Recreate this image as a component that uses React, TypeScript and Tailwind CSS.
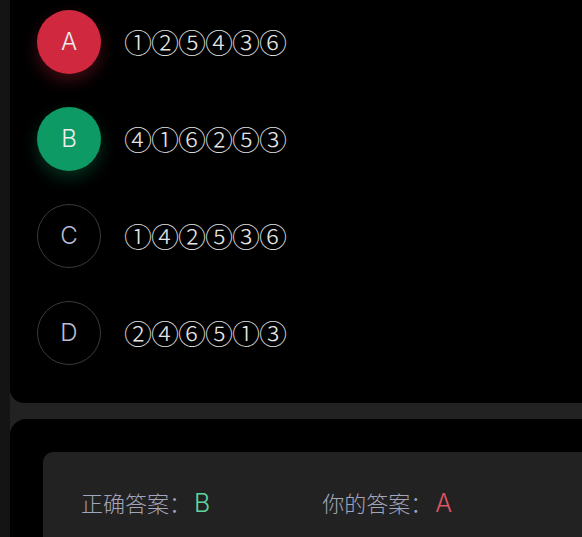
import React from 'react';

type Opt = { key: string; seq: string; state: 'wrong' | 'right' | 'none' };

const options: Opt[] = [
  { key: 'A', seq: '①②⑤④③⑥', state: 'wrong' },
  { key: 'B', seq: '④①⑥②⑤③', state: 'right' },
  { key: 'C', seq: '①④②⑤③⑥', state: 'none' },
  { key: 'D', seq: '②④⑥⑤①③', state: 'none' },
];

const font = { fontFamily: 'Inter, "Noto Sans CJK SC", sans-serif' };

const OptionRow: React.FC<{ opt: Opt }> = ({ opt }) => {
  const circle =
    opt.state === 'wrong'
      ? 'bg-[#d0283f] text-[#ececec] shadow-[0_7px_16px_rgba(208,40,63,0.3)]'
      : opt.state === 'right'
      ? 'bg-[#0e9a64] text-[#ececec] shadow-[0_7px_16px_rgba(14,154,100,0.3)]'
      : 'border border-[#3a3a3a] text-[#b9bcd6]';
  return (
    <div className="flex items-center h-[97px]">
      <div className={`w-16 h-16 rounded-full flex items-center justify-center text-[24px] font-light ${circle}`}>
        {opt.key}
      </div>
      <div
        className="ml-[23px] text-[28px] font-light leading-none text-[#e4e4e4] tracking-[-1px]"
        style={{ fontFamily: '"Noto Sans CJK SC", sans-serif' }}
      >
        {opt.seq}
      </div>
    </div>
  );
};

export default function App() {
  return (
    <div className="flex w-[582px] h-[537px] overflow-hidden bg-[#222222]" style={font}>
      <div className="w-[10px] shrink-0 bg-[#141414]" />
      <div className="flex-1 flex flex-col">
        <div className="bg-black rounded-bl-[14px] pl-[27px] h-[403px] flex flex-col">
          <div className="-mt-[7px]">
            {options.map((o) => (
              <OptionRow key={o.key} opt={o} />
            ))}
          </div>
        </div>
        <div className="mt-4 flex-1 bg-black rounded-tl-[16px] pl-[33px] pt-[33px]">
          <div className="bg-[#222222] rounded-tl-[10px] h-full flex items-baseline pl-[38px] pt-[36px] text-[22px] leading-[30px]">
            <span className="text-[#a3a5bb] font-light">正确答案：</span>
            <span className="ml-[3px] text-[25px] font-light text-[#5fd3a0]">B</span>
            <span className="ml-[112px] text-[#a3a5bb] font-light">你的答案：</span>
            <span className="ml-[3px] text-[25px] font-light text-[#dd5366]">A</span>
          </div>
        </div>
      </div>
    </div>
  );
}
